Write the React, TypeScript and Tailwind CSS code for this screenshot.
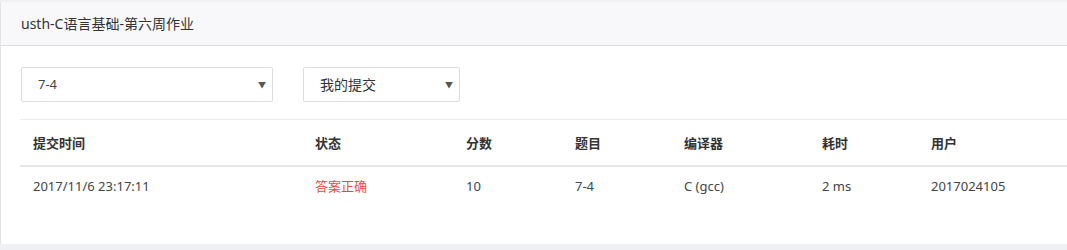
const font = { fontFamily: '"Noto Sans", "Noto Sans CJK SC", sans-serif' }

const cols = 'grid grid-cols-[282px_151px_109px_109px_138px_109px_1fr]'

const headers = ['提交时间', '状态', '分数', '题目', '编译器', '耗时', '用户']

function Select({ label, width, mono }: { label: string; width: string; mono?: boolean }) {
  return (
    <div className={`${width} h-[35px] flex items-center justify-between border border-[#dcdcdc] rounded-[2px] bg-white pl-4 pr-[6px]`}>
      <span className={mono ? 'text-[13px] text-[#444]' : 'text-[14px] text-[#333]'}>{label}</span>
      <span className="text-[8px] text-[#555]">▼</span>
    </div>
  )
}

export default function App() {
  return (
    <div className="w-[1067px] h-[250px] overflow-hidden bg-[#eef0f4] pt-[2px]" style={font}>
      <div className="w-[1100px] h-[242px] bg-white border-l border-[#e3e3e6]">
        <div className="h-[44px] bg-[#f8f8fa] border-b border-[#dedee2] flex items-center pl-5">
          <span className="text-[14px] text-[#333]">usth-C语言基础-第六周作业</span>
        </div>
        <div className="flex gap-[30px] pl-5 pt-[21px]">
          <Select label="7-4" width="w-[252px]" mono />
          <Select label="我的提交" width="w-[157px]" />
        </div>
        <div className="ml-[19px] mt-[17px] border-t border-[#ececee]">
          <div className={`${cols} h-[47px] pt-[2px] items-center border-b-2 border-[#e6e6e8]`}>
            {headers.map((h) => (
              <div key={h} className="px-[13px] text-[13px] font-semibold text-[#333]">{h}</div>
            ))}
          </div>
          <div className={`${cols} h-[40px] items-center text-[13px] text-[#444]`}>
            <div className="px-[13px]">2017/11/6 23:17:11</div>
            <div className="px-[13px] text-[#e74c3c]">答案正确</div>
            <div className="px-[13px] text-[#34495e]">10</div>
            <div className="px-[13px] text-[#34495e]">7-4</div>
            <div className="px-[13px]">C (gcc)</div>
            <div className="px-[13px]">2 ms</div>
            <div className="px-[13px]">2017024105</div>
          </div>
        </div>
      </div>
    </div>
  )
}
